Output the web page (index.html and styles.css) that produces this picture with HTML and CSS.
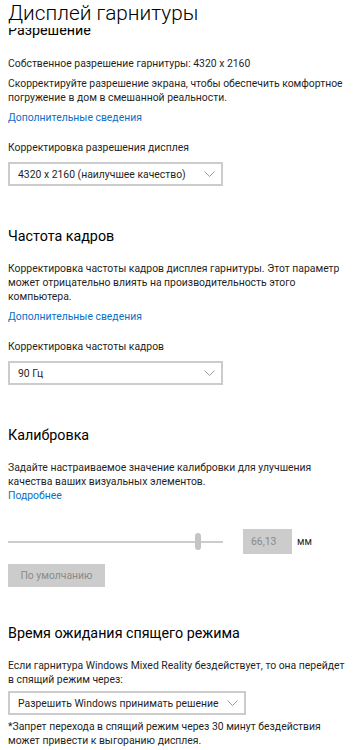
FILE: index.html
```html
<!DOCTYPE html>
<html lang="ru">
<head>
    <meta charset="UTF-8">
    <meta name="viewport" content="width=device-width, initial-scale=1.0">
    <title>Дисплей гарнитуры</title>
    <link rel="stylesheet" href="styles.css">
</head>
<body>
    <header class="page-header">
        <h1 class="page-title">Дисплей гарнитуры</h1>
    </header>

    <main class="scroller">
        <section class="group group-first">
            <h2 class="group-title">Разрешение</h2>
            <p class="text">Собственное разрешение гарнитуры: 4320 x 2160</p>
            <p class="text">Скорректируйте разрешение экрана, чтобы обеспечить комфортное погружение в дом в смешанной реальности.</p>
            <a href="#" class="link">Дополнительные сведения</a>
            <label class="field-label">Корректировка разрешения дисплея</label>
            <div class="select select-wide">
                <span>4320 x 2160 (наилучшее качество)</span>
                <svg class="chevron" width="11" height="6" viewBox="0 0 11 6"><path d="M0.5 0.5 L5.5 5.5 L10.5 0.5" fill="none" stroke="#9a9a9a" stroke-width="1"/></svg>
            </div>
        </section>

        <section class="group">
            <h2 class="group-title">Частота кадров</h2>
            <p class="text">Корректировка частоты кадров дисплея гарнитуры. Этот параметр может отрицательно влиять на производительность этого компьютера.</p>
            <a href="#" class="link">Дополнительные сведения</a>
            <label class="field-label">Корректировка частоты кадров</label>
            <div class="select select-wide">
                <span>90 Гц</span>
                <svg class="chevron" width="11" height="6" viewBox="0 0 11 6"><path d="M0.5 0.5 L5.5 5.5 L10.5 0.5" fill="none" stroke="#9a9a9a" stroke-width="1"/></svg>
            </div>
        </section>

        <section class="group">
            <h2 class="group-title">Калибровка</h2>
            <p class="text text-flush">Задайте настраиваемое значение калибровки для улучшения качества ваших визуальных элементов.</p>
            <a href="#" class="link">Подробнее</a>
            <div class="slider-row">
                <div class="slider">
                    <div class="slider-track"></div>
                    <div class="slider-thumb" style="left: 187px"></div>
                </div>
                <div class="value-box">66,13</div>
                <span class="unit">мм</span>
            </div>
            <button class="btn" disabled>По умолчанию</button>
        </section>

        <section class="group group-sleep">
            <h2 class="group-title">Время ожидания спящего режима</h2>
            <p class="text text-flush">Если гарнитура Windows Mixed Reality бездействует, то она перейдет в спящий режим через:</p>
            <div class="select select-sleep">
                <span>Разрешить Windows принимать решение</span>
                <svg class="chevron" width="11" height="6" viewBox="0 0 11 6"><path d="M0.5 0.5 L5.5 5.5 L10.5 0.5" fill="none" stroke="#9a9a9a" stroke-width="1"/></svg>
            </div>
            <p class="note">*Запрет перехода в спящий режим через 30 минут бездействия может привести к выгоранию дисплея.</p>
        </section>
    </main>
</body>
</html>
```

FILE: styles.css
```css
* {
    margin: 0;
    padding: 0;
    box-sizing: border-box;
}

body {
    font-family: Roboto, "Noto Sans", sans-serif;
    background: #fff;
    color: #000;
    width: 354px;
    height: 750px;
    overflow: hidden;
    display: flex;
    flex-direction: column;
}

.page-header {
    height: 28px;
    padding-left: 8px;
    background: #fff;
    overflow: hidden;
    flex-shrink: 0;
    position: relative;
    z-index: 1;
}

.page-title {
    font-size: 20.8px;
    font-weight: 300;
    line-height: 26px;
    white-space: nowrap;
}

.scroller {
    flex: 1;
    overflow: hidden;
    padding-left: 8px;
    padding-right: 4px;
}

.group {
    display: flex;
    flex-direction: column;
    align-items: flex-start;
    margin-top: 38px;
}

.group-first {
    margin-top: -10px;
}

.group-first .group-title {
    margin-bottom: 15px;
}

.group-sleep {
    margin-top: 34px;
}

.group-title {
    font-size: 14.3px;
    font-weight: 400;
    line-height: 24px;
    margin-bottom: 14px;
}

.text {
    font-size: 10.4px;
    line-height: 14px;
    color: #1f1f1f;
    margin-bottom: 6px;
}

.text-flush {
    margin-bottom: 0;
}

.link {
    font-size: 10.4px;
    line-height: 14px;
    color: #0a6fc4;
    text-decoration: none;
}

.field-label {
    font-size: 10.4px;
    line-height: 14px;
    color: #1f1f1f;
    margin-top: 16px;
    margin-bottom: 7px;
}

.select {
    height: 24px;
    border: 2px solid #cccccc;
    display: flex;
    align-items: center;
    justify-content: space-between;
    padding: 0 6px 0 8px;
    font-size: 10.4px;
    color: #1f1f1f;
    white-space: nowrap;
}

.select-wide {
    width: 215px;
}

.select-sleep {
    width: 238px;
    margin-top: 4px;
}

.chevron {
    flex-shrink: 0;
}

.slider-row {
    display: flex;
    align-items: center;
    margin-top: 26px;
    height: 25px;
}

.slider {
    position: relative;
    width: 215px;
    height: 25px;
}

.slider-track {
    position: absolute;
    left: 0;
    right: 0;
    top: 12px;
    height: 2px;
    background: #cccccc;
}

.slider-thumb {
    position: absolute;
    top: 4px;
    width: 6px;
    height: 17px;
    border-radius: 3px;
    background: #c4c4c4;
}

.value-box {
    width: 49px;
    height: 25px;
    margin-left: 20px;
    background: #cccccc;
    color: #8a8a8a;
    font-size: 10.4px;
    line-height: 25px;
    padding-left: 8px;
}

.unit {
    font-size: 10px;
    margin-left: 5px;
    color: #1f1f1f;
}

.btn {
    margin-top: 10px;
    width: 97px;
    height: 23px;
    border: none;
    background: #cccccc;
    color: #8a8a8a;
    font-family: inherit;
    font-size: 10.4px;
}

.note {
    font-size: 10.4px;
    line-height: 14px;
    color: #1f1f1f;
    margin-top: 5px;
}
```
